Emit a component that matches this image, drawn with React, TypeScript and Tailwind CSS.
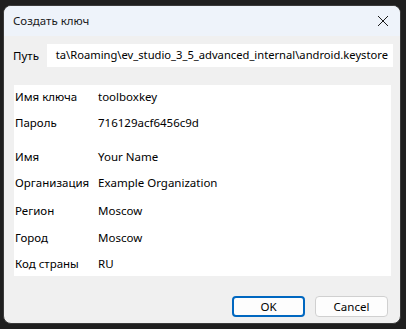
import React from "react";

const rows: { label: string; value: string; mt: string }[] = [
  { label: "Имя ключа", value: "toolboxkey", mt: "mt-0" },
  { label: "Пароль", value: "716129acf6456c9d", mt: "mt-[2px]" },
  { label: "Имя", value: "Your Name", mt: "mt-[10px]" },
  { label: "Организация", value: "Example Organization", mt: "mt-[2px]" },
  { label: "Регион", value: "Moscow", mt: "mt-[4px]" },
  { label: "Город", value: "Moscow", mt: "mt-[3px]" },
  { label: "Код страны", value: "RU", mt: "mt-[2px]" },
];

export default function App() {
  return (
    <div
      className="w-[406px] h-[329px] bg-[#1f1f1f] pt-[5px] pl-[3px] text-[11.5px] text-black"
      style={{ fontFamily: '"Noto Sans", "Open Sans", sans-serif' }}
    >
      <div className="w-[398px] h-[319px] bg-[#f0f0f0] rounded-[8px] overflow-hidden border border-[#3a3a3a] flex flex-col">
        <div className="h-[30px] bg-[#eef3fa] flex items-center justify-between pl-[9px] pr-[8px] shrink-0">
          <span className="text-[#1a1a1a]">Создать ключ</span>
          <svg width="12" height="12" viewBox="0 0 12 12" className="mr-[3px]">
            <path d="M1 1 L11 11 M11 1 L1 11" stroke="#1a1a1a" strokeWidth="1" fill="none" />
          </svg>
        </div>
        <div className="flex items-center mt-[8px] pl-[9px] pr-[7px]">
          <span className="w-[34px] shrink-0">Путь</span>
          <div className="flex-1 min-w-0 h-[23px] bg-white flex items-center justify-end pr-[5px] overflow-hidden whitespace-nowrap">
            <span className="text-[11.2px]">ta\Roaming\ev_studio_3_5_advanced_internal\android.keystore</span>
          </div>
        </div>
        <div className="mt-[18px] ml-[10px] w-[377px] h-[191px] bg-white flex flex-col">
          {rows.map((r) => (
            <div key={r.label} className={`h-[24px] flex items-center ${r.mt}`}>
              <span className="w-[84px] pl-[1px] shrink-0">{r.label}</span>
              <span>{r.value}</span>
            </div>
          ))}
        </div>
        <div className="flex justify-end gap-[10px] mt-[20px] pr-[12px]">
          <button className="w-[73px] h-[21px] rounded-[4px] border-2 border-[#0067c0] bg-[#fdfdfd] flex items-center justify-center leading-none">
            OK
          </button>
          <button className="w-[73px] h-[21px] rounded-[4px] border border-[#d0d0d0] bg-[#fdfdfd] flex items-center justify-center leading-none">
            Cancel
          </button>
        </div>
      </div>
    </div>
  );
}
